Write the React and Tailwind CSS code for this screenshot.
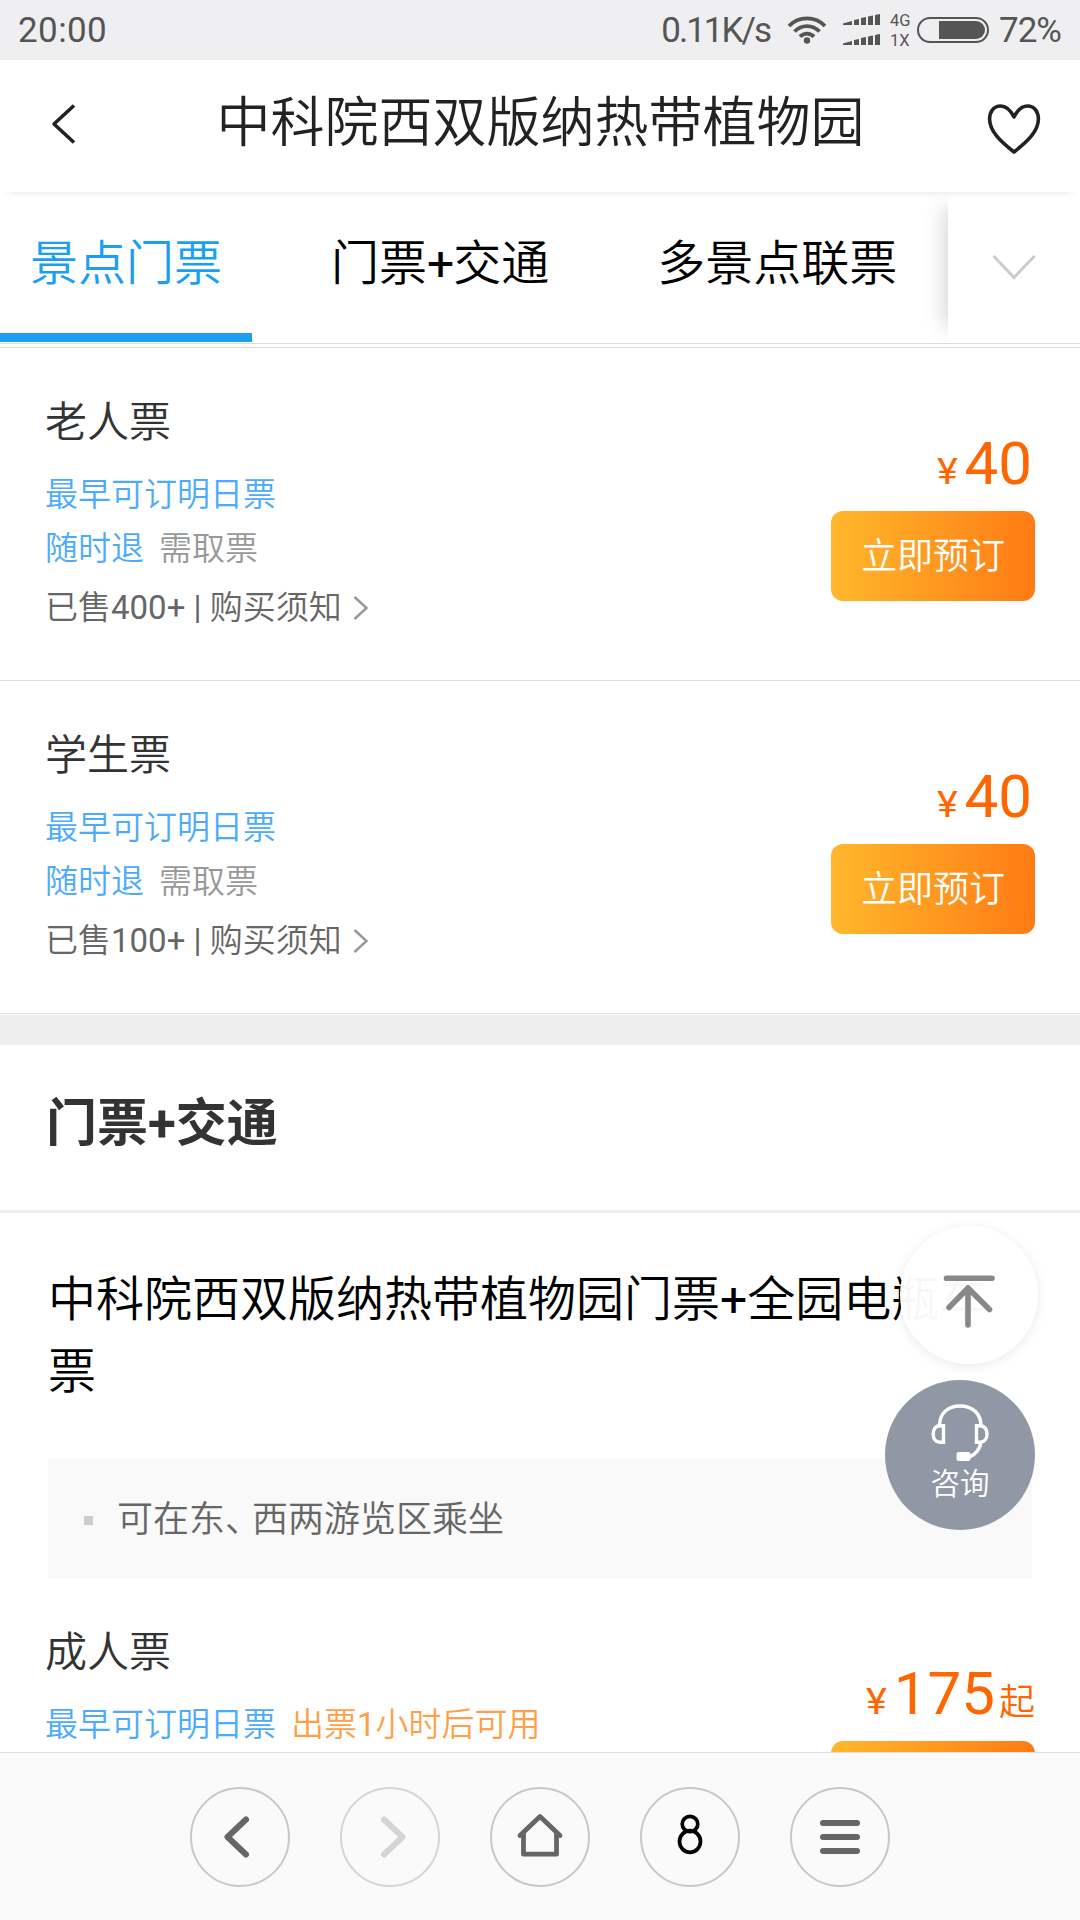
import React from "react";

function StatusBar() {
  return (
    <div className="flex h-[60px] shrink-0 items-center bg-[#efeff1] pl-[18px] pr-[19px] text-[35px] leading-[60px] text-[#555]">
      <span className="mr-auto pt-[2px] tracking-[0.4px]">20:00</span>
      <span className="mr-[17px] pt-[2px] tracking-[-2px]">0.11K/s</span>
      <svg className="mr-[16px]" width="40" height="30" viewBox="0 0 40 30" fill="none" stroke="#555" strokeWidth="3.8">
        <path d="M2 11C11.500 0.800 28.500 0.800 38 11" />
        <path d="M7.500 16.500C14.500 9.200 25.500 9.200 32.500 16.500" />
        <path d="M13 21.700C17 17.600 23 17.600 27 21.700" />
        <circle cx="20" cy="25.500" r="3.200" fill="#555" stroke="none" />
      </svg>
      <svg className="mr-[9px]" width="38" height="32" viewBox="0 0 38 32" fill="#555">
        {[0, 20].map((y) => (
          <g key={y} transform={`translate(0 ${y})`}>
            <path d="M0 9.500L9 7V11H0Z" />
            <path d="M11 6L16 5V11H11Z" />
            <path d="M18 4L23 3V11H18Z" />
            <path d="M25 2.500L30 1.500V11H25Z" />
            <path d="M32 1L37 0V11H32Z" />
          </g>
        ))}
      </svg>
      <div className="mr-[5px] flex w-[22px] flex-col pt-px text-[16.5px] leading-[20px]">
        <span>4G</span>
        <span>1X</span>
      </div>
      <div className="mr-[10px] flex h-[26px] w-[72px] items-center justify-end rounded-full border-2 border-[#555] pr-[2px]">
        <div className="h-[18px] w-[46px] rounded-r-full bg-[#555]" />
      </div>
      <span className="pt-[2px] tracking-[-1px]">72%</span>
    </div>
  );
}

function Header() {
  return (
    <div className="z-10 flex h-[132px] shrink-0 items-center justify-between bg-white pl-[49px] pr-[38px] shadow-[0_8px_8px_-8px_rgba(0,0,0,0.12)]">
      <svg width="54" height="44" viewBox="0 0 54 44" fill="none" stroke="#222" strokeWidth="3.6">
        <path d="M25 1.500L5 20L25 38.500" strokeLinejoin="round" />
      </svg>
      <h1 className="mr-[8px] pb-[4px] text-[54px] leading-[72px] font-[350] text-[#222]">中科院西双版纳热带植物园</h1>
      <svg width="56" height="52" viewBox="0 0 56 52" className="mt-[5px]" fill="none" stroke="#222" strokeWidth="3.6" strokeLinejoin="round">
        <path d="M28 14C24 6 19 3 14.500 3C7.500 3 3.600 9 3.600 16C3.600 28 14 38 28 49C42 38 52.400 28 52.400 16C52.400 9 48.500 3 41.500 3C37 3 32 6 28 14Z" />
      </svg>
    </div>
  );
}

function Tabs() {
  return (
    <div className="flex h-[152px] shrink-0 border-b border-[#ddd] bg-white text-[48px] font-[350] text-black">
      <div className="flex w-[948px] overflow-hidden whitespace-nowrap">
        <div className="flex h-[150px] w-[252px] shrink-0 items-center justify-center border-b-[9px] border-[#1a9ff3] pt-[2px] text-[#1a9ff3]">景点门票</div>
        <div className="ml-[49px] flex h-[150px] shrink-0 items-center px-[30px] pb-[7px]">
          <span>门票<span className="font-normal tracking-[-1px]">+</span>交通</span>
        </div>
        <div className="ml-[48px] flex h-[150px] shrink-0 items-center px-[30px] pb-[7px]">多景点联票</div>
      </div>
      <div className="flex h-[150px] w-[132px] items-center justify-center bg-white pt-[2px] shadow-[-20px_0_20px_-16px_rgba(0,0,0,0.17)] [clip-path:inset(0_0_0_-50px)]">
        <svg width="44" height="28" viewBox="0 0 44 28" fill="none" stroke="#ccc" strokeWidth="3">
          <path d="M1.500 2L22 23.500L42.500 2" />
        </svg>
      </div>
    </div>
  );
}

function Ticket({ name, tags, sold, price, from }) {
  return (
    <div className="flex h-[333px] shrink-0 justify-between border-b border-[#ddd] pl-[45px] pr-[45px]">
      <div className="pt-[45px]">
        <div className="text-[42px] leading-[60px] font-[350] text-[#333]">{name}</div>
        <div className="mt-[15px] flex flex-col text-[33px] leading-[54px] font-[350]">
          {tags.map((row, i) => (
            <div key={i} className="flex gap-[15px]">
              {row.map(([label, cls]) => (
                <span key={cls} className={cls}>{label}</span>
              ))}
            </div>
          ))}
        </div>
        {sold && (
          <div className="mt-[8px] flex items-center text-[33px] leading-[48px] font-[350] text-[#666]">
            <span className="whitespace-pre">已售<span className="font-normal">{sold}+ | </span>购买须知</span>
            <svg className="ml-[11px]" width="16" height="24" viewBox="0 0 16 24" fill="none" stroke="#999" strokeWidth="2.500">
              <path d="M1.500 1L13.500 12L1.500 23" />
            </svg>
          </div>
        )}
      </div>
      <div className="flex flex-col items-end pt-[80px]">
        <div className="flex h-[72px] items-baseline text-[36px] leading-[72px] text-[#ff6600]">
          <span className="mr-[7px] origin-right scale-x-110">¥</span>
          <span className="text-[60px]">{price}</span>
          {from ? <span className="ml-[4px] translate-y-px font-[350]">起</span> : <span className="w-[3px]" />}
        </div>
        <button className="mt-[11px] h-[90px] w-[204px] rounded-[12px] bg-linear-to-r from-[#ffb72c] to-[#ff7a14] pt-[2px] text-[36px] leading-[88px] font-[350] text-white">
          {sold && "立即预订"}
        </button>
      </div>
    </div>
  );
}

const blue = "text-[#4cabfc]";
const grey = "text-[#999]";
const orange = "text-[#ff9f4a]";

function NavButton({ children, faded }) {
  return (
    <div className={`flex h-[100px] w-[100px] items-center justify-center rounded-full border-2 ${faded ? "border-[#d5d5d5]" : "border-[#c8c8c8]"}`}>
      <svg width="60" height="60" viewBox="0 0 60 60" fill="none" stroke={faded ? "#d5d5d5" : "#666"} strokeWidth="5.500" strokeLinecap="round" strokeLinejoin="round">
        {children}
      </svg>
    </div>
  );
}

function BottomNav() {
  return (
    <div className="z-10 flex h-[168px] shrink-0 justify-center gap-[50px] border-t border-[#ddd] bg-[#fafafa] pt-[34px]">
      <NavButton><path d="M36 12.500L17.500 30L36 47.500" strokeWidth="6" /></NavButton>
      <NavButton faded><path d="M24 12.500L42.500 30L24 47.500" strokeWidth="6" /></NavButton>
      <NavButton>
        <path d="M10 28.500L30 9.500L50 28.500" strokeWidth="4.800" />
        <path d="M13.500 27V47.200H46.500V27" strokeWidth="4.800" />
      </NavButton>
      <NavButton>
        <g stroke="#000" strokeWidth="3.700">
          <ellipse cx="30" cy="17" rx="7.800" ry="7.600" />
          <ellipse cx="30" cy="34.500" rx="10.500" ry="10.800" />
        </g>
      </NavButton>
      <NavButton><path d="M13 16H47M13 30H47M13 44H47" strokeWidth="6" /></NavButton>
    </div>
  );
}

function FloatingButtons() {
  return (
    <>
      <div className="absolute left-[900px] top-[1226px] z-20 h-[138px] w-[138px] rounded-full bg-white/97 shadow-[0_2px_12px_rgba(0,0,0,0.09)]">
        <svg width="138" height="138" viewBox="0 0 138 138" fill="none" stroke="#888" strokeWidth="5.600" strokeLinecap="round" strokeLinejoin="round">
          <path d="M46.500 52.300H92M68 99V62M49 81.500L68 62L89.500 83.500" />
        </svg>
      </div>
      <div className="absolute left-[885px] top-[1380px] z-20 flex h-[150px] w-[150px] flex-col items-center rounded-full bg-[#8c94a1]/96 pt-[23px] text-white">
        <svg width="60" height="60" viewBox="0 0 60 60" fill="none" stroke="#fff" strokeWidth="3.400">
          <path d="M9.500 23C9.500 10 18 3 30 3S51 10 51 23" />
          <path d="M13.500 22.700V39.200H10C5 39.200 3.200 35 3.200 31S5 22.700 10 22.700Z" />
          <path d="M46.500 22.700V39.200H50C55 39.200 57 35 57 31S55 22.700 50 22.700Z" />
          <path d="M51 39C50 46 46 51 39.500 54" />
          <rect x="26.500" y="49" width="14" height="9" rx="2" fill="#fff" stroke="none" />
        </svg>
        <span className="mt-px text-[29.5px] leading-[40px] font-[350]">咨询</span>
      </div>
    </>
  );
}

export default function App() {
  return (
    <div className="relative flex h-[1920px] w-[1080px] flex-col overflow-hidden bg-white font-['Roboto','Noto_Sans_CJK_SC',sans-serif]">
      <StatusBar />
      <Header />
      <Tabs />
      <div className="flex h-[1408px] flex-col overflow-hidden bg-white">
        <div className="h-[4px] shrink-0 border-b border-[#ddd]" />
        <Ticket name="老人票" sold="400" price="40" tags={[[["最早可订明日票", blue]], [["随时退", blue], ["需取票", grey]]]} />
        <Ticket name="学生票" sold="100" price="40" tags={[[["最早可订明日票", blue]], [["随时退", blue], ["需取票", grey]]]} />
        <div className="mt-px h-[30px] shrink-0 bg-[#eee]" />
        <h2 className="h-[168px] shrink-0 border-b-[3px] border-[#eee] pl-[46px] pt-[44px] text-[51px] leading-[70px] font-bold text-[#333]">门票+交通</h2>
        <div className="h-[246px] shrink-0 px-[48px] pt-[51px] text-[48px] leading-[72px] font-[350] text-black">
          中科院西双版纳热带植物园门票<span className="font-normal">+</span>全园电瓶车票
        </div>
        <div className="mx-[48px] flex h-[120px] shrink-0 items-center gap-[24px] bg-[#f9f9f9] pl-[36px] text-[36px] font-[350] text-[#666]">
          <span className="mt-[3px] h-[9px] w-[9px] bg-[#ccc]" />
          <span className="pt-[2px]">可在东<span className="tracking-[-9px]">、</span>西两游览区乘坐</span>
        </div>
        <div className="-mt-px">
          <Ticket
            name="成人票"
            price="175"
            from
            tags={[[["最早可订明日票", blue], [<>出票<span className="font-normal">1</span>小时后可用</>, orange]]]}
          />
        </div>
      </div>
      <BottomNav />
      <FloatingButtons />
    </div>
  );
}
